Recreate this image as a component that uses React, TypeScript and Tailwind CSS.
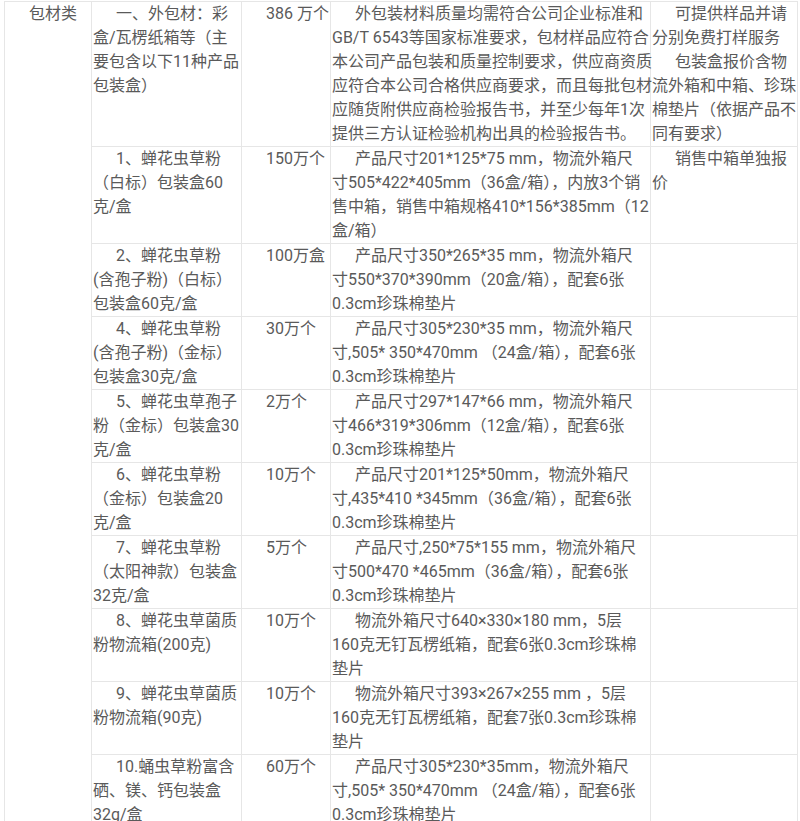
import { Fragment } from 'react';

interface Item {
  name: string[];
  qty: string;
  spec: string[];
  note?: string[][];
}

const items: Item[] = [
  {
    name: ['一、外包材：彩', '盒/瓦楞纸箱等（主', '要包含以下11种产品', '包装盒）'],
    qty: '386 万个',
    spec: [
      '外包装材料质量均需符合公司企业标准和',
      'GB/T 6543等国家标准要求，包材样品应符合',
      '本公司产品包装和质量控制要求，供应商资质',
      '应符合本公司合格供应商要求，而且每批包材',
      '应随货附供应商检验报告书，并至少每年1次',
      '提供三方认证检验机构出具的检验报告书。',
    ],
    note: [
      ['可提供样品并请', '分别免费打样服务'],
      ['包装盒报价含物', '流外箱和中箱、珍珠', '棉垫片（依据产品不', '同有要求）'],
    ],
  },
  {
    name: ['1、蝉花虫草粉', '（白标）包装盒60', '克/盒'],
    qty: '150万个',
    spec: [
      '产品尺寸201*125*75 mm，物流外箱尺',
      '寸505*422*405mm（36盒/箱），内放3个销',
      '售中箱，销售中箱规格410*156*385mm（12',
      '盒/箱）',
    ],
    note: [['销售中箱单独报', '价']],
  },
  {
    name: ['2、蝉花虫草粉', '(含孢子粉)（白标）', '包装盒60克/盒'],
    qty: '100万盒',
    spec: ['产品尺寸350*265*35 mm，物流外箱尺', '寸550*370*390mm（20盒/箱），配套6张', '0.3cm珍珠棉垫片'],
  },
  {
    name: ['4、蝉花虫草粉', '(含孢子粉)（金标）', '包装盒30克/盒'],
    qty: '30万个',
    spec: ['产品尺寸305*230*35 mm，物流外箱尺', '寸,505* 350*470mm （24盒/箱），配套6张', '0.3cm珍珠棉垫片'],
  },
  {
    name: ['5、蝉花虫草孢子', '粉（金标）包装盒30', '克/盒'],
    qty: '2万个',
    spec: ['产品尺寸297*147*66 mm，物流外箱尺', '寸466*319*306mm（12盒/箱），配套6张', '0.3cm珍珠棉垫片'],
  },
  {
    name: ['6、蝉花虫草粉', '（金标）包装盒20', '克/盒'],
    qty: '10万个',
    spec: ['产品尺寸201*125*50mm，物流外箱尺', '寸,435*410 *345mm（36盒/箱），配套6张', '0.3cm珍珠棉垫片'],
  },
  {
    name: ['7、蝉花虫草粉', '（太阳神款）包装盒', '32克/盒'],
    qty: '5万个',
    spec: ['产品尺寸,250*75*155 mm，物流外箱尺', '寸500*470 *465mm（36盒/箱），配套6张', '0.3cm珍珠棉垫片'],
  },
  {
    name: ['8、蝉花虫草菌质', '粉物流箱(200克)'],
    qty: '10万个',
    spec: ['物流外箱尺寸640×330×180 mm，5层', '160克无钉瓦楞纸箱，配套6张0.3cm珍珠棉', '垫片'],
  },
  {
    name: ['9、蝉花虫草菌质', '粉物流箱(90克)'],
    qty: '10万个',
    spec: ['物流外箱尺寸393×267×255 mm ，5层', '160克无钉瓦楞纸箱，配套7张0.3cm珍珠棉', '垫片'],
  },
  {
    name: ['10.蛹虫草粉富含', '硒、镁、钙包装盒', '32g/盒'],
    qty: '60万个',
    spec: ['产品尺寸305*230*35mm，物流外箱尺', '寸,505* 350*470mm （24盒/箱），配套6张', '0.3cm珍珠棉垫片'],
  },
];

function Lines({ lines }: { lines: string[] }) {
  return (
    <p className="indent-[23px] whitespace-nowrap">
      {lines.map((line, i) => (
        <Fragment key={i}>
          {i > 0 && <br />}
          {line}
        </Fragment>
      ))}
    </p>
  );
}

const cell = 'border border-[#e6e6e6] px-[1px] py-0 align-top';

export default function App() {
  return (
    <div className="min-h-screen bg-white pt-[1px] pl-[4px] font-[Roboto,'Noto_Sans_CJK_SC',sans-serif] text-[16px] leading-[24px] text-[#5a5a5a]">
      <table className="w-[793px] table-fixed border-collapse">
        <colgroup>
          <col className="w-[87px]" />
          <col className="w-[150px]" />
          <col className="w-[89px]" />
          <col className="w-[320px]" />
          <col className="w-[147px]" />
        </colgroup>
        <tbody>
          {items.map((item, idx) => (
            <tr key={idx}>
              {idx === 0 && (
                <td rowSpan={items.length} className={cell}>
                  <Lines lines={['包材类']} />
                </td>
              )}
              <td className={cell}>
                <Lines lines={item.name} />
              </td>
              <td className={cell}>
                <Lines lines={[item.qty]} />
              </td>
              <td className={cell}>
                <Lines lines={item.spec} />
              </td>
              <td className={cell}>
                {item.note?.map((para, i) => (
                  <Lines key={i} lines={para} />
                ))}
              </td>
            </tr>
          ))}
        </tbody>
      </table>
    </div>
  );
}
